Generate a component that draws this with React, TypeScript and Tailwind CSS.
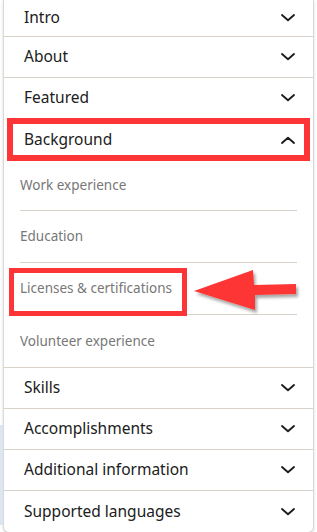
// Profile section picker — accordion list with annotation overlay (red boxes + arrow)

const FONT = "font-['Noto_Sans','Open_Sans',sans-serif]";

function Chevron({ up = false }: { up?: boolean }) {
  return (
    <svg width="14" height="8" viewBox="0 0 14 8" fill="none" className="shrink-0">
      <path
        d={up ? 'M1 7 L7 1.8 L13 7' : 'M1 1 L7 6.2 L13 1'}
        stroke="#1c1c1c"
        strokeWidth="1.9"
        strokeLinecap="round"
        strokeLinejoin="round"
      />
    </svg>
  );
}

function HeaderRow({ label, h = 'h-[41px]' }: { label: string; h?: string }) {
  return (
    <div className={`flex ${h} items-center justify-between border-b border-[#d8d2c8] pl-5 pr-[18px]`}>
      <span className="text-[15.5px] text-[#202020]">{label}</span>
      <Chevron />
    </div>
  );
}

function SubItem({ label, last = false, boxed = false }: { label: string; last?: boolean; boxed?: boolean }) {
  return (
    <div className="px-4">
      <div className={`relative flex h-[52px] items-center ${last ? '' : 'border-b border-[#d8d2c8]'}`}>
        <span className="text-[13.5px] text-[#777]">{label}</span>
        {boxed && (
          <div className="pointer-events-none absolute left-[-11px] top-[5px] h-[48px] w-[178px] border-[5px] border-[#fd3536]" />
        )}
      </div>
    </div>
  );
}

function Arrow() {
  return (
    <svg
      className="pointer-events-none absolute left-[190px] top-[266px]"
      width="115"
      height="52"
      viewBox="190 266 115 52"
    >
      <defs>
        <filter id="sh" x="-20%" y="-30%" width="140%" height="170%">
          <feDropShadow dx="2" dy="3" stdDeviation="1.5" floodColor="#000" floodOpacity="0.35" />
        </filter>
      </defs>
      <polygon
        points="194,291 253,270 254,285 296,284 296,294 255,295 255,310"
        fill="#fd3536"
        filter="url(#sh)"
      />
    </svg>
  );
}

export default function App() {
  return (
    <div className={`relative h-[532px] w-[317px] overflow-hidden bg-white ${FONT}`}>
      <div className="absolute left-0 top-[425px] h-[100px] w-[3px] bg-[#dce6f2]" />
      <div className="mx-[3px] overflow-hidden rounded-b-[6px] border-x border-b border-[#d9d9d9] bg-white shadow-[0_1px_3px_rgba(0,0,0,0.15)]">
        <HeaderRow label="Intro" h="h-[37px]" />
        <HeaderRow label="About" />
        <div className="flex h-[40px] items-center justify-between pl-5 pr-[18px]">
          <span className="text-[15.5px] text-[#202020]">Featured</span>
          <Chevron />
        </div>

        {/* Background — expanded, outlined in red */}
        <div className="ml-[3px] mr-[3px] flex h-[43px] items-center justify-between border-[6px] border-[#fd3536] pl-[11px] pr-[9px]">
          <span className="text-[15.5px] text-[#202020]">Background</span>
          <Chevron up />
        </div>
        <div className="border-b border-[#d8d2c8]">
          <div className="px-4">
            <div className="flex h-[50px] items-center border-b border-[#d8d2c8]">
              <span className="text-[13.5px] text-[#777]">Work experience</span>
            </div>
          </div>
          <SubItem label="Education" />
          <SubItem label="Licenses & certifications" boxed />
          <SubItem label="Volunteer experience" last />
        </div>

        <HeaderRow label="Skills" />
        <HeaderRow label="Accomplishments" />
        <HeaderRow label="Additional information" />
        <div className="flex h-[41px] items-center justify-between pl-5 pr-[18px]">
          <span className="text-[15.5px] text-[#202020]">Supported languages</span>
          <Chevron />
        </div>
      </div>
      <Arrow />
    </div>
  );
}
